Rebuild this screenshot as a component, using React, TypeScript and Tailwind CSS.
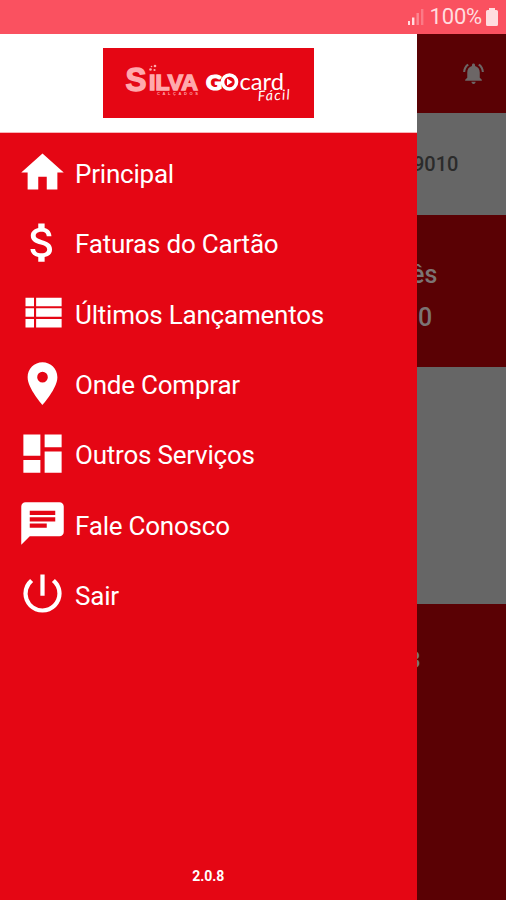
import { ReactNode } from "react";
import { IconType } from "react-icons";
import {
  MdAttachMoney,
  MdChat,
  MdDashboard,
  MdHome,
  MdLocationOn,
  MdNotificationsActive,
  MdPowerSettingsNew,
} from "react-icons/md";

function ViewListIcon({ className }: { className?: string }) {
  return (
    <svg viewBox="0 0 24 24" fill="currentColor" className={className}>
      <path d="M4 14h4v-4H4v4zm0 5h4v-4H4v4zM4 9h4V5H4v4zm5 5h12v-4H9v4zm0 5h12v-4H9v4zM9 5v4h12V5H9z" />
    </svg>
  );
}

const menu: { label: string; icon: IconType | typeof ViewListIcon }[] = [
  { label: "Principal", icon: MdHome },
  { label: "Faturas do Cartão", icon: MdAttachMoney },
  { label: "Últimos Lançamentos", icon: ViewListIcon },
  { label: "Onde Comprar", icon: MdLocationOn },
  { label: "Outros Serviços", icon: MdDashboard },
  { label: "Fale Conosco", icon: MdChat },
  { label: "Sair", icon: MdPowerSettingsNew },
];

function StatusBar() {
  return (
    <div className="flex h-[34px] items-center justify-end bg-[#fa5160] pr-2 text-[#ffdcdf]">
      <svg viewBox="0 0 16 16" className="mr-[6px] h-4 w-4" fill="currentColor">
        <rect x="0" y="12" width="2" height="4" />
        <rect x="4" y="8.5" width="2.4" height="7.5" />
        <rect x="8.5" y="4" width="2.4" height="12" opacity="0.4" />
        <rect x="13" y="0" width="2.4" height="16" opacity="0.3" />
      </svg>
      <span className="text-[22px] leading-none tracking-[-0.2px]">100%</span>
      <svg viewBox="0 0 12 18" className="ml-1 h-[18px] w-3" fill="currentColor">
        <path d="M3 0h6v2h1.5Q12 2 12 3.5v13q0 1.5-1.5 1.5h-9Q0 18 0 16.5v-13Q0 2 1.5 2H3z" />
      </svg>
    </div>
  );
}

function Logo() {
  return (
    <svg viewBox="0 0 211 70" className="h-[70px] w-[211px] bg-[#e50614]">
      <g fill="#ffa9ad" stroke="#ffa9ad" className="font-['Liberation_Sans'] font-bold">
        <text x="22.5" y="43" fontSize="34" strokeWidth="1.4" textLength="21" lengthAdjust="spacingAndGlyphs">S</text>
        <text x="46" y="41.5" fontSize="21.5" strokeWidth="1.4" textLength="49" lengthAdjust="spacingAndGlyphs">ILVA</text>
      </g>
      <g fill="#ffa9ad">
        <circle cx="47.5" cy="21.5" r="1.3" />
        <circle cx="52" cy="18" r="1.3" />
        <circle cx="48.5" cy="18.5" r="0.8" />
        <circle cx="51.5" cy="22" r="1.1" />
      </g>
      <text x="54" y="46.6" fontSize="4" fill="#ffa9ad" textLength="41" className="font-['Liberation_Sans'] font-bold">
        CALÇADOS
      </text>
      <text
        x="103"
        y="41.5"
        fontSize="21"
        fill="#fff"
        stroke="#fff"
        strokeWidth="1.2"
        textLength="16"
        lengthAdjust="spacingAndGlyphs"
        className="font-['Lato'] font-black"
      >
        G
      </text>
      <circle cx="126.5" cy="34" r="7" fill="none" stroke="#fff" strokeWidth="3.6" />
      <path d="M124 30.5v7l5.5-3.5z" fill="#fff" />
      <text x="136.5" y="41.8" fontSize="23.5" fill="#fff" textLength="44.5" lengthAdjust="spacingAndGlyphs" className="font-['Lato']">
        card
      </text>
      <text x="155" y="53" fontSize="14" fill="#fff" textLength="32" className="font-['Lato'] italic" transform="rotate(-3 155 53)">
        Fácil
      </text>
    </svg>
  );
}

function Drawer({ children }: { children: ReactNode }) {
  return (
    <div className="absolute inset-y-0 left-0 flex w-[416.5px] flex-col overflow-hidden bg-[#e50614] text-white">
      <div className="flex h-[99px] shrink-0 justify-center border-b border-[#f9b4b8] bg-white pt-[14px]">
        <Logo />
      </div>
      {children}
      <div className="mt-auto pb-[15px] text-center text-[14px] leading-[18px] font-bold">2.0.8</div>
    </div>
  );
}

// Home screen as seen through the scrim behind the drawer
function HomeScreen() {
  return (
    <div className="flex h-full flex-col bg-[#5a0104] pl-[416px] font-medium text-[#7c7474]">
      <div className="flex h-[79px] shrink-0 items-center justify-center">
        <MdNotificationsActive className="ml-[24px] h-[25px] w-[25px] text-[#6c6666]" />
      </div>
      <div className="flex h-[102px] shrink-0 items-center bg-[#666] text-[20px] text-[#2b2b2b]">
        <span className="-ml-[3px]">9010</span>
      </div>
      <div className="flex h-[152px] shrink-0 flex-col pt-[38px] text-[25px] leading-[43px]">
        <span className="-ml-[5px]">ês</span>
        <span className="ml-[2px]">0</span>
      </div>
      <div className="h-[237px] shrink-0 bg-[#666]" />
      <span className="-ml-[8.5px] pt-[43px] text-[23px] leading-[28px]">3</span>
    </div>
  );
}

export default function App() {
  return (
    <div className="flex h-[900px] w-[506px] flex-col overflow-hidden font-['Roboto',sans-serif]">
      <StatusBar />
      <div className="relative min-h-0 flex-1">
        <HomeScreen />
        <Drawer>
          <nav className="flex flex-col pt-[4px]">
            {menu.map(({ label, icon: Icon }) => (
              <a key={label} className="flex h-[70.3px] items-center pl-[17px]">
                <Icon className="h-[51px] w-[51px] shrink-0" />
                <span className="mt-[4px] ml-[7px] text-[26px] leading-none tracking-[-0.22px]">{label}</span>
              </a>
            ))}
          </nav>
        </Drawer>
      </div>
    </div>
  );
}
